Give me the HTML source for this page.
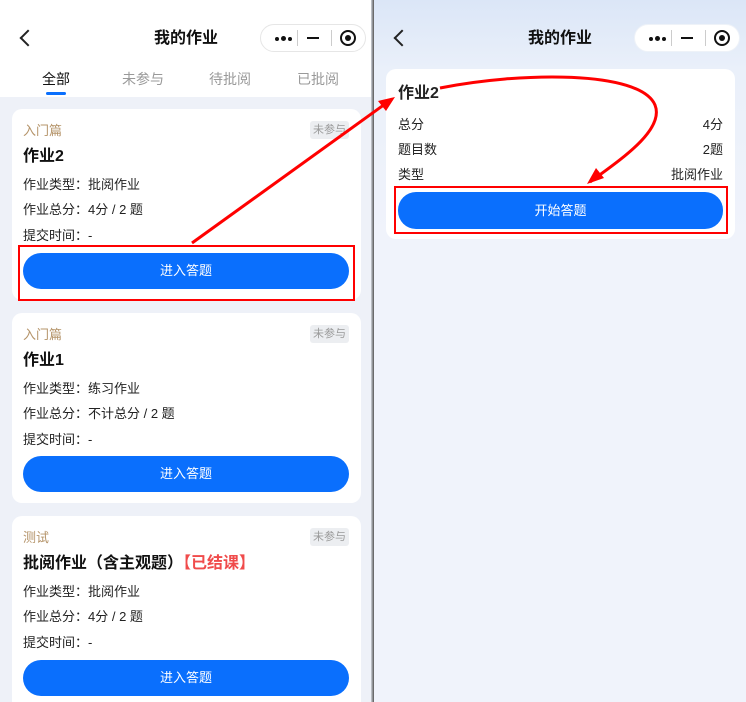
<!DOCTYPE html>
<html><head><meta charset="utf-8"><style>
*{margin:0;padding:0;box-sizing:border-box}
html,body{width:746px;height:702px;overflow:hidden}
body{position:relative;font-family:"Liberation Sans","Noto Sans CJK SC",sans-serif;background:#f0f3fb;color:#111;line-height:16px}
.L{position:absolute;left:0;top:0;width:371px;height:702px;background:#eef1f8}
.Lh{position:absolute;left:0;top:0;width:371px;height:97px;background:#fff}
.div{position:absolute;left:371px;top:0;width:3px;height:702px;background:linear-gradient(90deg,#cfd3da,#555)}
.R{position:absolute;left:374px;top:0;width:372px;height:702px;background:linear-gradient(180deg,#dbe6f7 0,#eaf0fa 70px,#f0f3fb 240px)}
.title{position:absolute;top:29px;font-size:16px;line-height:20px;font-weight:bold;width:120px;text-align:center}
.back{position:absolute;top:32px;width:12px;height:12px;border-left:2px solid #222;border-bottom:2px solid #222;transform:rotate(45deg)}
.cap{position:absolute;top:24px;width:106px;height:28px;border-radius:14px;background:#fff;border:1px solid #e6e6e6}
.cap span{position:absolute;top:5px;width:1px;height:16px;background:#ccc}
.cap i{position:absolute;top:12px;width:3px;height:3px;border-radius:50%;background:#111}
.tabs{position:absolute;top:71px;font-size:14px;color:#999}
.card{position:absolute;left:12px;width:349px;background:#fff;border-radius:10px;overflow:hidden}
.cat{position:absolute;left:11px;top:14px;font-size:13px;color:#b5946a}
.tag{position:absolute;right:12px;top:12px;font-size:11px;line-height:14px;color:#999;background:#eceef1;padding:2px 3px;border-radius:3px}
.h{position:absolute;left:11px;top:38px;font-size:16px;line-height:20px;font-weight:bold;white-space:nowrap}
.row{position:absolute;left:11px;font-size:13px;color:#222}
.btn{position:absolute;left:11px;width:326px;height:36px;border-radius:18px;background:#0a6ffd;color:#fff;font-size:13px;text-align:center;line-height:36px}
.rr{position:absolute;font-size:13px;color:#222}
</style></head><body>
<div class="L"></div>
<div class="Lh"></div>
<div class="back" style="left:22px"></div>
<div class="title" style="left:126px">我的作业</div>
<div class="cap" style="left:260px"><i style="left:14px;width:4px;height:4px;top:12px"></i><i style="left:20px;width:5px;height:5px;top:11px"></i><i style="left:27px;width:4px;height:4px;top:12px"></i><span style="left:36px"></span><b style="position:absolute;left:46px;top:12px;width:12px;height:2px;background:#111"></b><span style="left:70px"></span><b style="position:absolute;left:79px;top:5px;width:16px;height:16px;border:2px solid #111;border-radius:50%"></b><b style="position:absolute;left:84px;top:10px;width:6px;height:6px;background:#111;border-radius:50%"></b></div>
<div class="tabs" style="left:42px;color:#111">全部</div>
<div style="position:absolute;left:46px;top:92px;width:20px;height:3px;background:#0a6ffd;border-radius:2px"></div>
<div class="tabs" style="left:122px">未参与</div>
<div class="tabs" style="left:209px">待批阅</div>
<div class="tabs" style="left:297px">已批阅</div>

<div class="card" style="top:109px;height:191px">
<div class="cat">入门篇</div><div class="tag">未参与</div>
<div class="h">作业2</div>
<div class="row" style="top:68px">作业类型：批阅作业</div>
<div class="row" style="top:93px">作业总分：4分 / 2 题</div>
<div class="row" style="top:119px">提交时间：-</div>
<div class="btn" style="top:144px">进入答题</div></div>

<div class="card" style="top:313px;height:190px">
<div class="cat">入门篇</div><div class="tag">未参与</div>
<div class="h">作业1</div>
<div class="row" style="top:68px">作业类型：练习作业</div>
<div class="row" style="top:93px">作业总分：不计总分 / 2 题</div>
<div class="row" style="top:119px">提交时间：-</div>
<div class="btn" style="top:143px">进入答题</div></div>

<div class="card" style="top:516px;height:200px">
<div class="cat">测试</div><div class="tag">未参与</div>
<div class="h">批阅作业（含主观题）<span style="color:#f04b4b">【已结课】</span></div>
<div class="row" style="top:68px">作业类型：批阅作业</div>
<div class="row" style="top:93px">作业总分：4分 / 2 题</div>
<div class="row" style="top:119px">提交时间：-</div>
<div class="btn" style="top:144px">进入答题</div></div>

<div class="div"></div>
<div class="R"></div>
<div class="back" style="left:396px"></div>
<div class="title" style="left:500px">我的作业</div>
<div class="cap" style="left:634px;border-color:#eef2f8"><i style="left:14px;width:4px;height:4px;top:12px"></i><i style="left:20px;width:5px;height:5px;top:11px"></i><i style="left:27px;width:4px;height:4px;top:12px"></i><span style="left:36px"></span><b style="position:absolute;left:46px;top:12px;width:12px;height:2px;background:#111"></b><span style="left:70px"></span><b style="position:absolute;left:79px;top:5px;width:16px;height:16px;border:2px solid #111;border-radius:50%"></b><b style="position:absolute;left:84px;top:10px;width:6px;height:6px;background:#111;border-radius:50%"></b></div>
<div style="position:absolute;left:386px;top:69px;width:349px;height:170px;background:#fff;border-radius:10px"></div>
<div class="rr" style="left:398px;top:84px;font-size:16px;line-height:20px;font-weight:bold">作业2</div>
<div class="rr" style="left:398px;top:117px">总分</div><div class="rr" style="right:23px;top:117px">4分</div>
<div class="rr" style="left:398px;top:142px">题目数</div><div class="rr" style="right:23px;top:142px">2题</div>
<div class="rr" style="left:398px;top:167px">类型</div><div class="rr" style="right:23px;top:167px">批阅作业</div>
<div class="btn" style="left:398px;top:192px;width:325px;height:37px;line-height:37px">开始答题</div>

<div style="position:absolute;left:18px;top:245px;width:337px;height:56px;border:2px solid #f00"></div>
<div style="position:absolute;left:394px;top:186px;width:334px;height:48px;border:2px solid #f00"></div>
<svg style="position:absolute;left:0;top:0" width="746" height="702">
<g stroke="#f00" stroke-width="3" fill="none">
<path d="M192 243 L392 99"/>
<path d="M440 88 C520 72 640 70 655 105 C665 130 620 160 590 182"/>
</g>
<polygon points="395,97 378,101 386,111" fill="#f00"/>
<polygon points="587,184 596,168 604,178" fill="#f00"/>
</svg>
</body></html>
